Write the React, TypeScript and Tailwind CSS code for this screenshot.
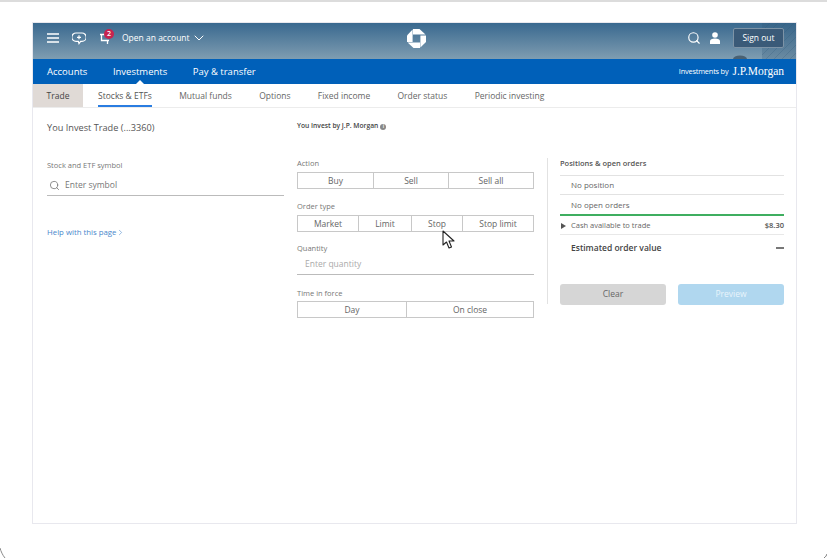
import { ChevronDown, ChevronRight, Search } from "lucide-react";

const tabs = ["Stocks & ETFs", "Mutual funds", "Options", "Fixed income", "Order status", "Periodic investing"];

function Segments({ items }: { items: { label: string; w: string }[] }) {
  return (
    <div className="flex h-[17px] border border-[#c8c8c8]">
      {items.map((item, i) => (
        <div
          key={item.label}
          className={`${item.w} flex items-center justify-center pt-[1px] text-[8.5px] text-[#666] ${i > 0 ? "border-l border-[#c8c8c8]" : ""}`}
        >
          {item.label}
        </div>
      ))}
    </div>
  );
}

function ChaseLogo() {
  return (
    <svg width="19" height="19" viewBox="0 0 19 19" fill="#fff">
      <path d="M6 0h6.5l6 5.6H6z" />
      <path d="M13.4 6.5H19V13l-5.6 5.6z" />
      <path d="M13 13.4V19H6.5L.6 13.4z" />
      <path d="M5.6 13H0V6.5L5.6.6z" />
    </svg>
  );
}

export default function App() {
  return (
    <div className="relative h-[558px] w-[827px] overflow-hidden bg-white font-['Open_Sans',sans-serif]">
      {/* window corners at the bottom of the capture */}
      <svg className="absolute bottom-0 left-0" width="8" height="10" viewBox="0 0 8 10" fill="none" stroke="#8a8a8a">
        <path d="M0 0c1 3.5 2.5 7 5 10" />
      </svg>
      <svg className="absolute bottom-0 right-0" width="4" height="4" viewBox="0 0 4 4" fill="none" stroke="#777">
        <path d="M4 0C3.5 1.5 2.5 3 1 4" />
      </svg>

      <div className="h-full border-t-2 border-[#dcdcdc] pt-[20px] pl-[32px]">
        <div className="relative flex h-[502px] w-[765px] flex-col border border-[#e8e8ee] bg-white">
          <header className="relative flex h-[36px] items-center bg-gradient-to-b from-[#39698f] to-[#7f9db1] pb-[6px] pl-[14px] pr-[12px] text-white">
            <svg className="absolute right-0 top-0" width="66" height="36" viewBox="0 0 66 36" fill="none">
              <ellipse cx="10" cy="36" rx="7" ry="3.5" fill="#4a6172" />
              <rect x="32" y="0" width="34" height="36" fill="#2f5878" fillOpacity="0.25" />
              <path
                d="M32 8L40 0M32 16L48 0M32 24L56 0M32 32L64 0M36 36L66 6M44 36L66 14M52 36L66 22M60 36l6-6"
                stroke="#2f5878"
                strokeOpacity="0.25"
              />
            </svg>
            <svg width="12" height="10" viewBox="0 0 12 10" stroke="#fff" strokeWidth="1.3">
              <path d="M0 1h12M0 5h12M0 9h12" />
            </svg>
            <svg className="ml-[13px]" width="14" height="13" viewBox="0 0 14 13" fill="none" stroke="#fff" strokeWidth="1.2">
              <path d="M4 1h6a3.4 3.4 0 0 1 0 8.4H8.6L7 11.6 6.4 9.4H4A3.4 3.4 0 0 1 4 1z" />
              <path d="M7 3.3v4M5 5.3h4" />
            </svg>
            <div className="relative ml-[13px] h-[14px] w-[11px]">
              <svg width="11" height="12" viewBox="0 0 11 12" fill="none" stroke="#fff" strokeWidth="1.3" className="mt-[2px]">
                <path d="M1 1.5h1.5v6H10M3 1.5h6M8.5 7.5V11" />
              </svg>
              <span className="absolute -top-[2px] left-[5px] flex h-[10px] w-[10px] items-center justify-center rounded-full bg-[#c8234f] text-[7px] font-semibold">
                2
              </span>
            </div>
            <span className="ml-[12px] text-[8.5px]">Open an account</span>
            <ChevronDown className="ml-[1px]" size={16} strokeWidth={1.5} />
            <div className="ml-[200px]">
              <ChaseLogo />
            </div>
            <div className="relative ml-auto flex items-center">
              <Search size={14} strokeWidth={2} />
              <svg className="ml-[9px]" width="10" height="12" viewBox="0 0 10 12" fill="#fff">
                <circle cx="5" cy="3" r="2.8" />
                <path d="M0 12V9.2C0 7.4 2 6.6 5 6.6s5 .8 5 2.6V12z" />
              </svg>
              <div className="ml-[13px] flex h-[20px] w-[51px] items-center justify-center rounded-[2px] border border-[#7d93a6] bg-[#3a5a78] text-[8.5px]">
                Sign out
              </div>
            </div>
          </header>

          <nav className="relative flex h-[25px] items-center bg-[#0060b9] pl-[14px] pr-[12px] pt-[1px] text-[9.5px] text-white">
            <span>Accounts</span>
            <span className="ml-[25.5px]">Investments</span>
            <span className="ml-[25.5px]">Pay &amp; transfer</span>
            <span className="ml-auto text-[7.4px] tracking-[-0.2px]">Investments by</span>
            <span className="ml-[4px] font-['Liberation_Serif',serif] text-[11.5px] leading-none">J.P.Morgan</span>
            <span className="absolute bottom-0 left-[103px] h-0 w-0 border-x-[4px] border-b-[4px] border-x-transparent border-b-white" />
          </nav>

          <div className="flex h-[24px] items-stretch border-b border-[#ececec] text-[8.5px] text-[#666]">
            <div className="flex w-[50px] items-center justify-center bg-[#e0dad6] pt-[1px] text-[#444]">Trade</div>
            <div className="ml-[15px] flex gap-[27.3px]">
              {tabs.map((tab, i) => (
                <div key={tab} className={`flex items-center pt-[3px] ${i === 0 ? "border-b-2 border-[#2a7de1] text-[#555]" : "pb-[2px]"}`}>
                  {tab}
                </div>
              ))}
            </div>
          </div>

          <main className="flex pl-[14px] pt-[13px] text-[#555]">
            <section className="w-[237px]">
              <h1 className="text-[9.2px] leading-[14px] text-[#555]">You Invest Trade (...3360)</h1>
              <label className="mt-[25px] block text-[7.5px] leading-[11px] text-[#777]">Stock and ETF symbol</label>
              <div className="mt-[4px] flex h-[21px] items-center gap-[5px] border-b border-[#bbb] pl-[2px] text-[8.5px] text-[#777]">
                <Search size={11} strokeWidth={1.8} />
                Enter symbol
              </div>
              <a className="mt-[31px] flex items-center text-[7.8px] text-[#4a87cc]">
                Help with this page
                <ChevronRight size={9} strokeWidth={1.5} />
              </a>
            </section>

            <section className="ml-[13px] w-[237px]">
              <div className="flex h-[11px] items-center gap-[2px] text-[6.7px] font-semibold leading-none text-[#444]">
                You Invest by J.P. Morgan
                <span className="flex h-[6px] w-[6px] items-center justify-center rounded-full bg-[#888] text-[5px] text-white">i</span>
              </div>
              <p className="mt-[26px] text-[7.5px] leading-[11px] text-[#777]">Action</p>
              <div className="mt-[3px]">
                <Segments items={[{ label: "Buy", w: "w-[75px]" }, { label: "Sell", w: "w-[75px]" }, { label: "Sell all", w: "flex-1" }]} />
              </div>
              <p className="mt-[12px] text-[7.5px] leading-[11px] text-[#777]">Order type</p>
              <div className="mt-[3px]">
                <Segments items={[{ label: "Market", w: "w-[60px]" }, { label: "Limit", w: "w-[53px]" }, { label: "Stop", w: "w-[51px]" }, { label: "Stop limit", w: "flex-1" }]} />
              </div>
              <p className="mt-[11px] text-[7.5px] leading-[11px] text-[#777]">Quantity</p>
              <div className="flex h-[21px] items-center border-b border-[#bbb] pl-[8px] text-[8.5px] text-[#aaa]">Enter quantity</div>
              <p className="mt-[13px] text-[7.5px] leading-[11px] text-[#777]">Time in force</p>
              <div className="mt-[2px]">
                <Segments items={[{ label: "Day", w: "w-[108px]" }, { label: "On close", w: "flex-1" }]} />
              </div>
            </section>

            <section className="ml-[13px] mt-[37px] h-[146px] w-[237px] border-l border-[#e2e2e2] pl-[12px]">
              <h2 className="mb-[6px] flex h-[11px] items-center text-[7.5px] font-semibold text-[#555]">Positions &amp; open orders</h2>
              <div className="flex h-[19px] items-center border-t border-[#e2e2e2] pl-[11px] text-[8px] text-[#666]">No position</div>
              <div className="flex h-[20px] items-center border-t border-[#e2e2e2] pl-[11px] text-[8px] text-[#666]">No open orders</div>
              <div className="flex h-[21px] items-center border-y border-t-2 border-y-[#e8e8e8] border-t-[#3fae60] pl-[1px] pt-[1px] text-[7.5px] text-[#666]">
                <span className="h-0 w-0 border-y-[3.5px] border-l-[5px] border-y-transparent border-l-[#555]" />
                <span className="ml-[5px]">Cash available to trade</span>
                <span className="ml-auto font-semibold text-[#555]">$8.30</span>
              </div>
              <div className="flex h-[26px] items-center pl-[11px] text-[8.5px] font-semibold text-[#444]">
                Estimated order value
                <span className="ml-auto h-[2px] w-[8px] bg-[#777]" />
              </div>
              <div className="mt-[23px] flex justify-between text-[8.5px]">
                <div className="flex h-[21px] w-[106px] items-center justify-center rounded-[3px] bg-[#d6d6d6] text-[#666]">Clear</div>
                <div className="flex h-[21px] w-[106px] items-center justify-center rounded-[3px] bg-[#b0d7ef] text-[#e8f4fb]">Preview</div>
              </div>
            </section>
          </main>

          {/* mouse pointer from the capture */}
          <svg className="absolute left-[409px] top-[207px]" width="14" height="19" viewBox="0 0 14 19">
            <path d="M1 1v14l3.5-3 2.5 6 2.5-1-2.5-6H12z" fill="#fff" stroke="#222" strokeWidth="1.1" strokeLinejoin="round" />
          </svg>
        </div>
      </div>
    </div>
  );
}
